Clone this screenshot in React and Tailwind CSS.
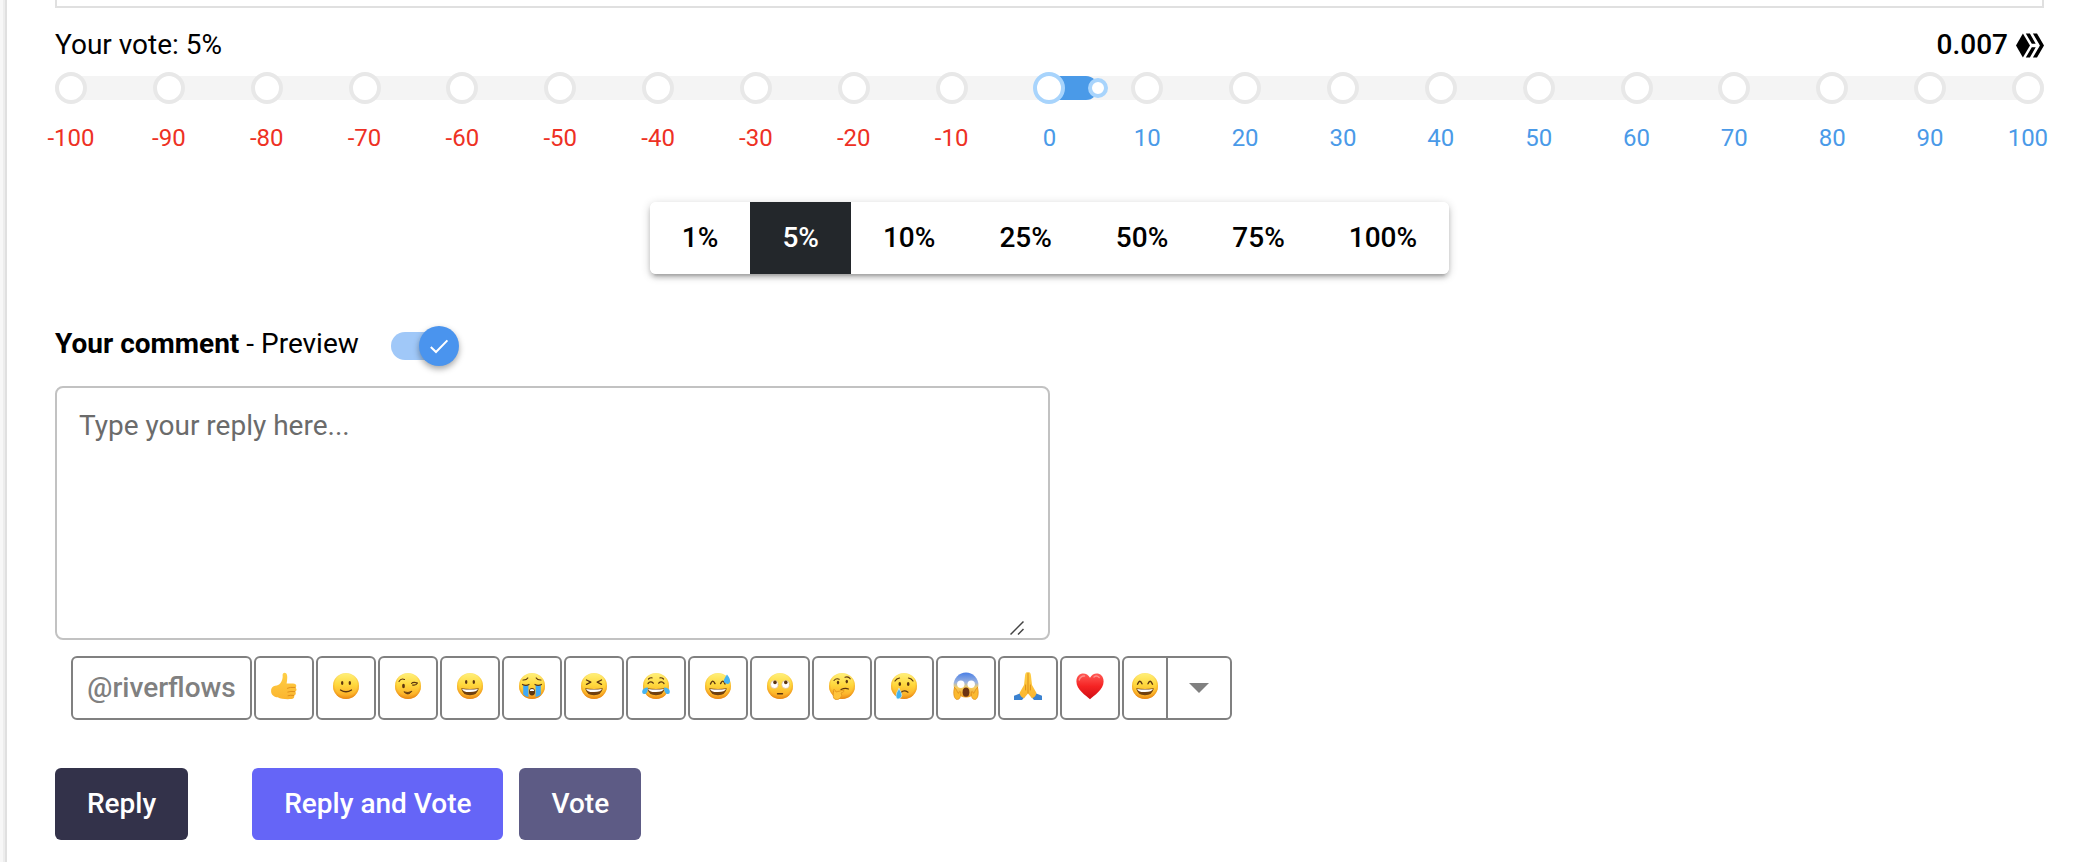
import React, { useState } from 'react';

const STOPS = [-100, -90, -80, -70, -60, -50, -40, -30, -20, -10, 0, 10, 20, 30, 40, 50, 60, 70, 80, 90, 100];
const PRESETS = [1, 5, 10, 25, 50, 75, 100];

const INK = '#5c3510';

const EMOJIS = [
    { name: 'thumbs up', Icon: ThumbsUp },
    { name: 'slight smile', Icon: SlightSmile },
    { name: 'wink', Icon: Wink },
    { name: 'grinning', Icon: Grinning },
    { name: 'loudly crying', Icon: Sob },
    { name: 'squinting laugh', Icon: Squint },
    { name: 'tears of joy', Icon: Joy },
    { name: 'sweat smile', Icon: SweatSmile },
    { name: 'eye roll', Icon: EyeRoll },
    { name: 'thinking', Icon: Thinking },
    { name: 'crying', Icon: Cry },
    { name: 'screaming', Icon: Scream },
    { name: 'folded hands', Icon: Pray },
    { name: 'heart', Icon: Heart },
];

// Shared gradients for the emoji drawings
function EmojiDefs() {
    return (
        <svg className="absolute size-0" aria-hidden="true">
            <defs>
                <linearGradient id="face" x1="0" y1="0" x2="0" y2="1">
                    <stop offset="0" stopColor="#fff07a" />
                    <stop offset="0.45" stopColor="#ffd83d" />
                    <stop offset="0.8" stopColor="#fdb52b" />
                    <stop offset="1" stopColor="#ee8f16" />
                </linearGradient>
                <radialGradient id="rim" cx="0.5" cy="0.45" r="0.56">
                    <stop offset="0.75" stopColor="#f59a1a" stopOpacity="0" />
                    <stop offset="1" stopColor="#e07f12" stopOpacity="0.75" />
                </radialGradient>
                <linearGradient id="skin" x1="0" y1="0" x2="0" y2="1">
                    <stop offset="0" stopColor="#ffd046" />
                    <stop offset="1" stopColor="#fbb52f" />
                </linearGradient>
                <linearGradient id="fear" x1="0" y1="0" x2="0" y2="1">
                    <stop offset="0" stopColor="#4a7fe6" />
                    <stop offset="0.4" stopColor="#9db4e0" />
                    <stop offset="0.6" stopColor="#f6cf62" />
                    <stop offset="1" stopColor="#f09a1c" />
                </linearGradient>
                <linearGradient id="heart" x1="0" y1="0" x2="0" y2="1">
                    <stop offset="0" stopColor="#ff5a55" />
                    <stop offset="0.5" stopColor="#f52323" />
                    <stop offset="1" stopColor="#cf0d14" />
                </linearGradient>
            </defs>
        </svg>
    );
}

function Emoji({ children }) {
    return (
        <svg viewBox="-14 -14 28 28" className="size-7" fill="none" strokeLinecap="round" strokeLinejoin="round" aria-hidden="true">
            {children}
        </svg>
    );
}

function Face({ children }) {
    return (
        <Emoji>
            <circle r="13" fill="url(#face)" />
            <circle r="13" fill="url(#rim)" />
            {children}
        </Emoji>
    );
}

function OpenMouth() {
    return (
        <>
            <path d="M-8.8 2.2Q0 3.8 8.8 2.2Q7.5 9.2 0 9.2T-8.8 2.2Z" fill="#70400f" />
            <path d="M-7.9 2.9Q0 4.2 7.9 2.9Q7.2 5.8 0 6T-7.9 2.9Z" fill="#fff" />
        </>
    );
}

function ThumbsUp() {
    return (
        <Emoji>
            <path d="M-3.5 -3C-1.4 -6 -1.2 -8 -1.4 -11C-1.2 -14.2 2.4 -14 3 -11C3.6 -8 3 -5 2.6 -2.4H9C12.6 -2.4 13 .8 11.4 1.4C13 2.4 12.8 5 11.1 5.6C12.4 6.8 11.8 9 10 9.4C10.8 11.4 9.6 12.8 7.5 13C2 13.4 -3 13 -6.3 11.2C-9 11.2 -12.9 9.2 -12.9 5.4C-13 1.6 -11 .2 -8.8 -.2C-6.6 -.6 -5 -1 -3.5 -3Z" fill="url(#skin)" />
            <path d="M3.4 2.2Q5.5 .9 11.2 1.4M3.8 6Q6.4 5 10.8 5.6M4 9.7Q6.5 8.9 9.8 9.4" stroke="#dc8b18" strokeWidth="0.9" />
        </Emoji>
    );
}

function SlightSmile() {
    return (
        <Face>
            <ellipse cx="-3.8" cy="-3" rx="1.2" ry="2" fill={INK} />
            <ellipse cx="3.8" cy="-3" rx="1.2" ry="2" fill={INK} />
            <path d="M-5.5 4Q0 7.5 5.5 4" stroke={INK} strokeWidth="1.3" />
        </Face>
    );
}

function Wink() {
    return (
        <Face>
            <path d="M-9 -4.5Q-7 -8 -3.5 -6.5M3.5 -2.5Q5 -4.5 9.5 -3Q8 -.2 4.5 -1" stroke={INK} strokeWidth="1.1" />
            <ellipse cx="-4.5" cy="0" rx="1.4" ry="2.2" fill={INK} />
            <path d="M-3.8 6Q0 10.5 4 5.2Q0 7.5 -3.8 6Z" fill={INK} stroke={INK} strokeWidth="0.8" />
        </Face>
    );
}

function Grinning() {
    return (
        <Face>
            <ellipse cx="-3.8" cy="-4" rx="1.2" ry="1.9" fill={INK} />
            <ellipse cx="3.8" cy="-4" rx="1.2" ry="1.9" fill={INK} />
            <OpenMouth />
        </Face>
    );
}

function Sob() {
    return (
        <Face>
            <path d="M-8.8 -1H-3.6V11Q-6.5 10.5 -8.8 8.5ZM8.8 -1H3.6V11Q6.5 10.5 8.8 8.5Z" fill="#3fa9f5" />
            <path d="M-9.5 -1.5Q-6 .3 -3 -1.5M9.5 -1.5Q6 .3 3 -1.5M-9 -6Q-5.5 -5.8 -4.2 -8M9 -6Q5.5 -5.8 4.2 -8" stroke={INK} strokeWidth="1.2" />
            <ellipse cx="0" cy="5.8" rx="3" ry="3.8" fill={INK} />
            <path d="M-2 3.8Q0 2.2 2 3.8V5H-2Z" fill="#fff" />
        </Face>
    );
}

function Squint() {
    return (
        <Face>
            <path d="M-7.5 -6L-3.2 -3.8L-7.5 -1.6M7.5 -6L3.2 -3.8L7.5 -1.6" stroke={INK} strokeWidth="1.3" />
            <OpenMouth />
        </Face>
    );
}

function Joy() {
    return (
        <Face>
            <path d="M-8 -2.5Q-5.5 -5.5 -2.6 -2.8M8 -2.5Q5.5 -5.5 2.6 -2.8M-7.5 -7Q-6 -8.5 -4 -8.2M7.5 -7Q6 -8.5 4 -8.2" stroke={INK} strokeWidth="1.2" />
            <OpenMouth />
            <path d="M-8 1.5Q-13.5 1.8 -13.8 5.5T-9.8 7.4Q-8 5.5 -8 1.5ZM8 1.5Q13.5 1.8 13.8 5.5T9.8 7.4Q8 5.5 8 1.5Z" fill="#46b4f2" />
        </Face>
    );
}

function SweatSmile() {
    return (
        <Face>
            <path d="M-7.5 -2Q-5.5 -7.5 -3 -2.4M7 -2Q5 -7.5 2.6 -2.4" stroke={INK} strokeWidth="1.4" />
            <OpenMouth />
            <path d="M9 -11.5Q12.6 -7 12 -4.2T8.6 -2.2T5.8 -5Q5.8 -7 9 -11.5Z" fill="#46b4f2" />
        </Face>
    );
}

function EyeRoll() {
    return (
        <Face>
            <circle cx="-5.6" cy="-1.5" r="3.9" fill="#fff" stroke="#d9b184" strokeWidth="0.6" />
            <circle cx="5.6" cy="-1.5" r="3.9" fill="#fff" stroke="#d9b184" strokeWidth="0.6" />
            <circle cx="-5" cy="-3.6" r="1.8" fill={INK} />
            <circle cx="5.8" cy="-3.6" r="1.8" fill={INK} />
            <path d="M-2.5 7.8H2.5" stroke={INK} strokeWidth="1.4" />
        </Face>
    );
}

function Thinking() {
    return (
        <Face>
            <path d="M-8 -5.5Q-6 -8 -2.8 -6.8M3 -8.8Q6.5 -10 8.2 -7.2M-1 3.6Q3 1.6 6.5 3" stroke={INK} strokeWidth="1.1" />
            <ellipse cx="-4" cy="-3.4" rx="1.2" ry="1.8" fill={INK} />
            <ellipse cx="4.8" cy="-4.4" rx="1.2" ry="1.8" fill={INK} />
            <path d="M-8.5 5.5Q-9.5 3.5 -8 3.4Q-6.8 3.6 -6 6L1 4.3Q2.8 4.4 1.6 5.8L-1 7Q.8 9.5 -1.6 12Q-4 14.4 -7.2 13.2Q-9.6 11.6 -8.5 5.5Z" fill="#ffc33b" stroke="#e0901b" strokeWidth="0.8" />
        </Face>
    );
}

function Cry() {
    return (
        <Face>
            <path d="M-9 -5Q-7.5 -7.5 -4.5 -8M9 -5Q7.5 -7.5 4.5 -8M-3 6.5Q0 3.6 4 6.2" stroke={INK} strokeWidth="1.2" />
            <ellipse cx="-4.2" cy="-2" rx="1.3" ry="2.1" fill={INK} />
            <ellipse cx="4.2" cy="-2" rx="1.3" ry="2.1" fill={INK} />
            <path d="M-5 2.5Q-1.8 7.5 -2.2 9.8T-5.2 12.8T-8 9.8Q-8 7 -5 2.5Z" fill="#43b3ee" stroke="#dff3fc" strokeWidth="0.6" />
        </Face>
    );
}

function Scream() {
    return (
        <Emoji>
            <ellipse cx="0" cy="-1" rx="12.4" ry="12.4" fill="url(#fear)" />
            <circle cx="-5.2" cy="-1.8" r="3.7" fill="#fff" />
            <circle cx="5.2" cy="-1.8" r="3.7" fill="#fff" />
            <ellipse cx="0" cy="6.2" rx="3.4" ry="4.6" fill="#6b3212" />
            <path d="M-11.5 1.5C-12.5 4 -13 12 -9.5 13.4C-6 13.8 -5.2 11 -5.4 5.8C-6.5 4.4 -7.2 7 -7.6 7.4C-9 6.2 -9.6 2 -11.5 1.5ZM11.5 1.5C12.5 4 13 12 9.5 13.4C6 13.8 5.2 11 5.4 5.8C6.5 4.4 7.2 7 7.6 7.4C9 6.2 9.6 2 11.5 1.5Z" fill="#fbb92f" stroke="#dd8a18" strokeWidth="0.7" />
        </Emoji>
    );
}

function Pray() {
    return (
        <Emoji>
            <path d="M-14 9.8L-7 7L-3 10.5L-6 14H-14ZM14 9.8L7 7L3 10.5L6 14H14Z" fill="#3b82d0" />
            <path d="M-.2 -13.5C-1.8 -14.4 -2.8 -13 -3 -10L-4 -1L-8.5 7Q-7.5 11.5 -4 12.2L0 7.5L4 12.2Q7.5 11.5 8.5 7L4 -1L3 -10C2.8 -13 1.8 -14.4 .2 -13.5Z" fill="url(#skin)" />
            <path d="M0 -13V7M-2.4 -1V4M2.4 -1V4" stroke="#d98a17" strokeWidth="0.9" />
        </Emoji>
    );
}

function Heart() {
    return (
        <Emoji>
            <path d="M0 13.2C-4 9.4 -13.6 3.7 -13.6 -4.6C-13.6 -13.6 -3.5 -15 0 -8.2C3.5 -15 13.6 -13.6 13.6 -4.6C13.6 3.7 4 9.4 0 13.2Z" fill="url(#heart)" />
            <path d="M-10.8 -6Q-9.5 -10.3 -5.5 -10M4 -9Q6.5 -11.2 9.2 -8.6" stroke="#ffaaa5" strokeWidth="1.4" opacity="0.7" />
        </Emoji>
    );
}

function Smile() {
    return (
        <Face>
            <path d="M-7.5 -1.8Q-5.2 -7.5 -3 -2.2M7.5 -1.8Q5.2 -7.5 3 -2.2" stroke={INK} strokeWidth="1.4" />
            <OpenMouth />
        </Face>
    );
}

function HiveLogo() {
    return (
        <svg viewBox="0 0 28 25" className="h-[25px] w-7" fill="currentColor" aria-hidden="true">
            <path d="M0 12.5L6.9 .4L14 12.5L6.9 24.6Z" />
            <path d="M9.8 .4H13.9L19.7 10.8H15.8ZM15.8 14.2H19.7L13.9 24.6H9.8Z" />
            <path d="M16.9 .4H21L28 12.5L21 24.6H16.9L23.9 12.5Z" />
        </svg>
    );
}

const VoteSlider = ({ vote, onChange }) => {
    const start = Math.min(vote, 0);

    return (
        <div>
            <div className="relative h-8 flex items-center">
                <div className="h-6 w-full rounded-full bg-[#f4f4f4]" />
                <div className="absolute inset-x-4 inset-y-0">
                    <div
                        className="absolute top-1 h-6 rounded-r-xl bg-[#4a9ae8]"
                        style={{ left: `${(start + 100) / 2}%`, width: `${Math.abs(vote) / 2}%` }}
                    />
                </div>
                <div className="absolute inset-0 flex justify-between">
                    {STOPS.map((stop) => (
                        <span
                            key={stop}
                            className={`size-8 rounded-full border-4 bg-white ${stop >= start && stop <= Math.max(vote, 0) ? 'border-[#a8d4fc]' : 'border-[#e8e8e8]'}`}
                        />
                    ))}
                </div>
                <div className="absolute inset-x-4 inset-y-0">
                    <span
                        className="absolute top-[6px] size-5 -translate-x-1/2 rounded-full border-4 border-[#a8d4fc] bg-white"
                        style={{ left: `${(vote + 100) / 2}%` }}
                    />
                </div>
                <input
                    type="range"
                    min="-100"
                    max="100"
                    value={vote}
                    onChange={(e) => onChange(Number(e.target.value))}
                    aria-label="Your vote"
                    className="absolute inset-0 w-full opacity-0 cursor-pointer"
                />
            </div>
            <div className="mt-[22px] flex justify-between text-2xl leading-6">
                {STOPS.map((stop) => (
                    <span key={stop} className={`flex w-8 justify-center ${stop < 0 ? 'text-[#ee3124]' : 'text-[#4a9ae8]'}`}>
                        {stop}
                    </span>
                ))}
            </div>
        </div>
    );
};

const App = () => {
    const [vote, setVote] = useState(5);
    const [preview, setPreview] = useState(true);
    const [reply, setReply] = useState('');

    return (
        <div className="flex min-h-screen bg-[#f7f7f7] font-[Roboto,sans-serif] text-[28px] leading-8 text-black">
            <EmojiDefs />
            <main className="ml-[3px] flex-1 border-l-2 border-[#ededed] bg-white">
                <div className="min-h-full border-l-2 border-[#e0e0e0] pl-12 pr-9 pb-[22px]">
                    {/* bottom edge of the post body */}
                    <div className="h-2 border-2 border-t-0 border-[#e0e0e0]" />

                    <div className="flex h-16 items-center justify-between pt-[10px]">
                        <span>Your vote: {vote}%</span>
                        <span className="flex items-center gap-2 font-medium">
                            0.007
                            <HiveLogo />
                        </span>
                    </div>

                    <VoteSlider vote={vote} onChange={setVote} />

                    <div className="mt-[52px] flex justify-center">
                        <div className="flex overflow-hidden rounded-md font-medium shadow-[0_2px_10px_rgba(0,0,0,0.2),0_4px_4px_rgba(0,0,0,0.14),0_6px_2px_-4px_rgba(0,0,0,0.12)]">
                            {PRESETS.map((preset) => (
                                <button
                                    key={preset}
                                    type="button"
                                    onClick={() => setVote(preset)}
                                    className={`h-[72px] px-8 ${preset === vote ? 'bg-[#23272b] text-white' : 'bg-white'}`}
                                >
                                    {preset}%
                                </button>
                            ))}
                        </div>
                    </div>

                    <div className="mt-13 flex h-10 items-start gap-8 leading-9">
                        <span>
                            <label htmlFor="reply" className="font-bold">Your comment</label>
                            {' - '}
                            <label htmlFor="preview">Preview</label>
                        </span>
                        <span className="relative flex h-10 w-[68px] items-center">
                            <input
                                id="preview"
                                type="checkbox"
                                role="switch"
                                checked={preview}
                                onChange={(e) => setPreview(e.target.checked)}
                                className="peer h-7 w-14 cursor-pointer appearance-none rounded-full bg-gray-300 checked:bg-[#a0c8f8]"
                            />
                            <span className="pointer-events-none absolute left-0 flex size-10 items-center justify-center rounded-full bg-gray-400 shadow-[0_3px_6px_rgba(0,0,0,0.35)] peer-checked:left-7 peer-checked:bg-[#4a94ee]">
                                <svg viewBox="0 0 20 20" className="size-5" fill="none" stroke="#fff" strokeWidth="2" aria-hidden="true">
                                    <path d="M1.8 11L7 16L18.4 4.4" />
                                </svg>
                            </span>
                        </span>
                    </div>

                    <div className="relative mt-5 w-1/2">
                        <textarea
                            id="reply"
                            value={reply}
                            onChange={(e) => setReply(e.target.value)}
                            placeholder="Type your reply here..."
                            className="block h-[254px] w-full resize-none rounded-lg border-2 border-[#c2c2c2] px-[22px] py-5 leading-9 placeholder:text-[#6b6b6b] focus:outline-none"
                        />
                        <svg viewBox="0 0 14 14" className="pointer-events-none absolute bottom-[5px] right-[26px] size-[14px]" stroke="#444" strokeWidth="1.5" aria-hidden="true">
                            <path d="M.5 13.5L13.5 .5M8 13.5L13.5 8" />
                        </svg>
                    </div>

                    <div className="mt-4 ml-4 flex gap-[2px] text-[#808080]">
                        <button type="button" className="h-16 min-w-[181px] rounded-md border-2 border-[#808080] px-3 font-medium">
                            @riverflows
                        </button>
                        {EMOJIS.map(({ name, Icon }) => (
                            <button
                                key={name}
                                type="button"
                                aria-label={name}
                                className="flex h-16 w-15 items-center justify-center rounded-md border-2 border-[#808080] pb-1"
                            >
                                <Icon />
                            </button>
                        ))}
                        <div className="flex h-16 rounded-md border-2 border-[#808080]">
                            <button type="button" aria-label="smile" className="flex w-[42px] items-center justify-center pb-1">
                                <Smile />
                            </button>
                            <button type="button" aria-label="More emojis" className="flex w-16 items-center justify-center border-l-2 border-[#808080]">
                                <svg viewBox="0 0 20 10" className="h-[10px] w-5" fill="currentColor" aria-hidden="true">
                                    <path d="M0 0H20L10 10Z" />
                                </svg>
                            </button>
                        </div>
                    </div>

                    <div className="mt-12 flex gap-4 font-medium text-white">
                        <button type="button" className="mr-12 h-[72px] rounded-md bg-[#33324a] px-8">Reply</button>
                        <button type="button" className="h-[72px] rounded-md bg-[#6565f7] px-8">Reply and Vote</button>
                        <button type="button" className="h-[72px] rounded-md bg-[#5d5b85] px-8">Vote</button>
                    </div>
                </div>
            </main>
        </div>
    );
};

export default App;
